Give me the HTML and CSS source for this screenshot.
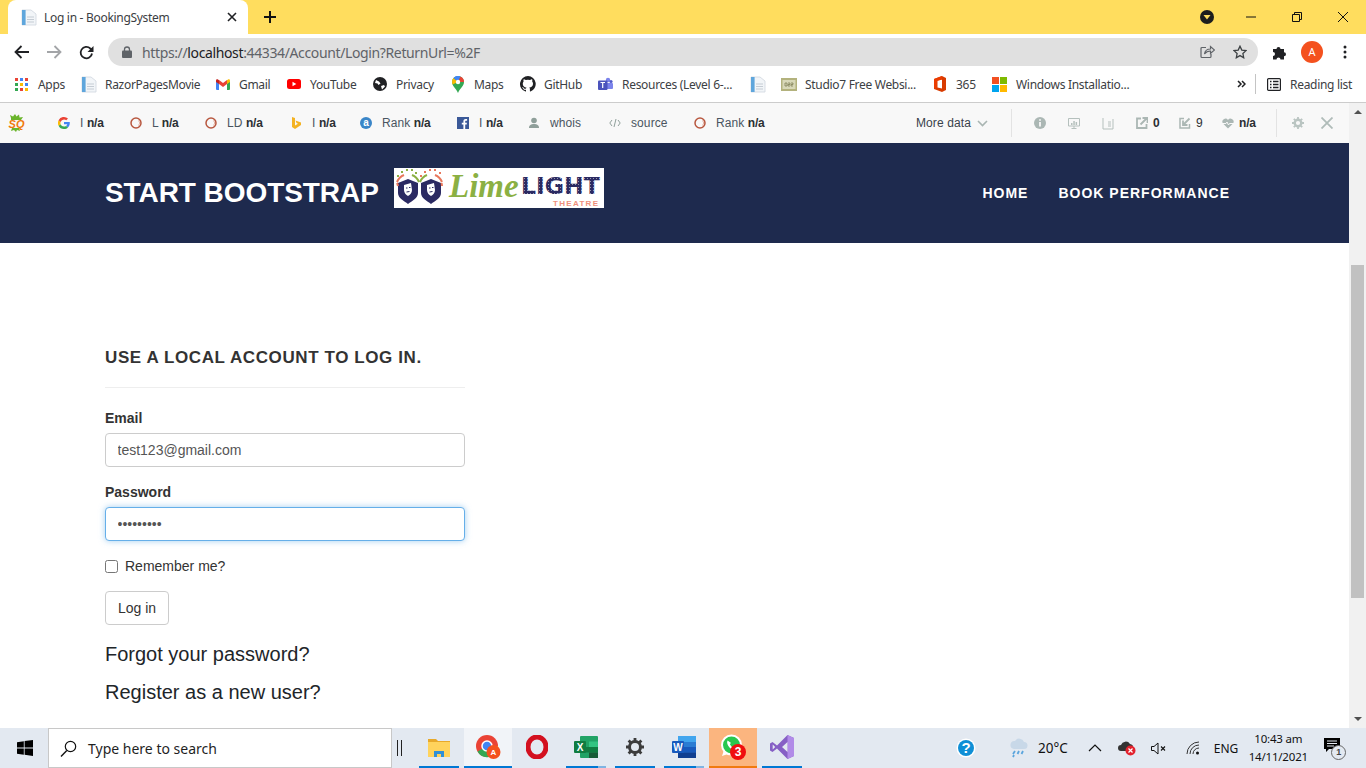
FILE: index.html
```html
<!DOCTYPE html>
<html lang="en">
<head>
<meta charset="utf-8">
<title>Log in - BookingSystem</title>
<link rel="stylesheet" href="styles.css">
</head>
<body>
<svg class="defs" width="0" height="0" aria-hidden="true">
  <symbol id="doc" viewBox="0 0 16 17">
    <path d="M1 1h9l5 4v11H1z" fill="#f2f5f8" stroke="#cfd6de" stroke-width=".8"/>
    <rect x="1" y="1" width="3.6" height="15" fill="#5fa6dc"/>
    <path d="M6 8h7M6 10.500h7M6 13h7" stroke="#c5ccd4" stroke-width="1"/>
  </symbol>
  <symbol id="ring" viewBox="0 0 12 12">
    <circle cx="6" cy="6" r="5" fill="none" stroke="#b8573f" stroke-width="1.500"/>
    <path d="M8.500 3.500a3.500 3.500 0 0 1 0 5" fill="none" stroke="#e7b5a5" stroke-width="1"/>
  </symbol>
  <pattern id="bulbs" width="3" height="3" patternUnits="userSpaceOnUse">
    <rect width="3" height="3" fill="#2b2a62"/>
    <circle cx="1.500" cy="1.500" r=".55" fill="#aab" />
  </pattern>
</svg>
<div class="tabstrip">
  <div class="tab">
    <svg class="fav" width="16" height="17"><use href="#doc"/></svg>
    <span class="tab-title">Log in - BookingSystem</span>
    <svg class="tab-x" width="10" height="10" viewBox="0 0 10 10"><path d="M1 1l8 8M9 1l-8 8" stroke="#202124" stroke-width="1.600"/></svg>
  </div>
  <svg class="newtab" width="12" height="12" viewBox="0 0 12 12"><path d="M6 0v12M0 6h12" stroke="#111" stroke-width="2"/></svg>
  <svg class="dl" width="14" height="14" viewBox="0 0 14 14"><circle cx="7" cy="7" r="7" fill="#1d1d1d"/><path d="M3.500 5h7L7 9.500z" fill="#ffdd5e"/></svg>
  <svg class="winbtn" width="10" height="10" viewBox="0 0 10 10"><path d="M0 5h10" stroke="#111" stroke-width="1"/></svg>
  <svg class="winbtn" width="10" height="10" viewBox="0 0 10 10"><path d="M.5 2.500h7v7h-7zM2.500 2.500v-2h7v7h-2" fill="none" stroke="#111" stroke-width="1"/></svg>
  <svg class="winbtn" width="10" height="10" viewBox="0 0 10 10"><path d="M0 0l10 10M10 0L0 10" stroke="#111" stroke-width="1"/></svg>
</div>
<div class="toolbar">
  <svg class="nav-ic" width="16" height="14" viewBox="0 0 16 14"><path d="M15 7H2M7.500 1L1.500 7l6 6" fill="none" stroke="#202124" stroke-width="1.800"/></svg>
  <svg class="nav-ic" width="16" height="14" viewBox="0 0 16 14"><path d="M1 7h13M8.500 1l6 6-6 6" fill="none" stroke="#a3a5a8" stroke-width="1.800"/></svg>
  <svg class="nav-ic" width="15" height="15" viewBox="0 0 15 15"><path d="M13 8.500A5.700 5.700 0 1 1 11.300 3.500L13.500 5.500" fill="none" stroke="#202124" stroke-width="1.800"/><path d="M14.500 1v6h-6z" fill="#202124"/></svg>
  <div class="omnibox">
    <svg width="10" height="12" viewBox="0 0 10 12"><path d="M2.500 5V3.500a2.500 2.500 0 0 1 5 0V5" fill="none" stroke="#5f6368" stroke-width="1.300"/><rect y="4.500" width="10" height="7.500" rx="1" fill="#5f6368"/></svg>
    <span class="url">https://<b class="host">localhost</b>:44334/Account/Login?ReturnUrl=%2F</span>
    <svg class="share" width="15" height="14" viewBox="0 0 15 14"><path d="M6 2.500H2a1 1 0 0 0-1 1v8a1 1 0 0 0 1 1h8a1 1 0 0 0 1-1V9" fill="none" stroke="#5f6368" stroke-width="1.200"/><path d="M4.500 9c.5-3.500 3-5 6-5V1.500L14.500 5 10.500 8.500V6c-2.500 0-4.500 1-6 3z" fill="none" stroke="#5f6368" stroke-width="1.200"/></svg>
    <svg class="star" width="14" height="14" viewBox="0 0 14 14"><path d="M7 1.200l1.800 3.900 4.200.5-3.100 2.900.8 4.200L7 10.600l-3.700 2.100.8-4.200L1 5.600l4.200-.5z" fill="none" stroke="#3c4043" stroke-width="1.300"/></svg>
  </div>
  <svg class="puzzle" width="16" height="16" viewBox="0 0 16 16"><path d="M1 5h3.500a2 2 0 1 1 4 0H12v3.300a2 2 0 1 1 0 4V15.500H8.500a2 2 0 1 0-4 0H1v-3.500a2 2 0 1 0 0-4z" fill="#202124"/></svg>
  <span class="avatar">A</span>
  <svg class="dots" width="4" height="14" viewBox="0 0 4 14"><circle cx="2" cy="2" r="1.500" fill="#202124"/><circle cx="2" cy="7" r="1.500" fill="#202124"/><circle cx="2" cy="12" r="1.500" fill="#202124"/></svg>
</div>
<div class="bookmarks">
  <div class="bm"><svg width="13" height="13" viewBox="0 0 13 13"><g><rect width="3" height="3" fill="#ea4335"/><rect x="5" width="3" height="3" fill="#4285f4"/><rect x="10" width="3" height="3" fill="#ea4335"/><rect y="5" width="3" height="3" fill="#34a853"/><rect x="5" y="5" width="3" height="3" fill="#fbbc05"/><rect x="10" y="5" width="3" height="3" fill="#4285f4"/><rect y="10" width="3" height="3" fill="#34a853"/><rect x="5" y="10" width="3" height="3" fill="#ea4335"/><rect x="10" y="10" width="3" height="3" fill="#fbbc05"/></g></svg><span class="apps-t">Apps</span></div>
  <div class="bm t"><svg width="16" height="17"><use href="#doc"/></svg><span>RazorPagesMovie</span></div>
  <div class="bm"><svg width="14" height="11" viewBox="0 0 14 11"><path d="M0 2v8a1 1 0 0 0 1 1h2V4.500z" fill="#4285f4"/><path d="M14 2v8a1 1 0 0 1-1 1h-2V4.500z" fill="#34a853"/><path d="M3 5V1l4 3 4-3v4L7 8z" fill="#ea4335"/><path d="M0 3V1.500C0 .5 1.200 0 2 .500L3 1.200V5z" fill="#c5221f"/><path d="M14 3V1.500c0-1-1.200-1.500-2-1L11 1.200V5z" fill="#fbbc05"/></svg><span>Gmail</span></div>
  <div class="bm"><svg width="14" height="10" viewBox="0 0 14 10"><rect width="14" height="10" rx="2.500" fill="#f00"/><path d="M5.500 2.800v4.400L9.300 5z" fill="#fff"/></svg><span>YouTube</span></div>
  <div class="bm"><svg width="14" height="14" viewBox="0 0 14 14"><circle cx="7" cy="7" r="7" fill="#202124"/><path d="M3 3l3 1.500 1.500 2-2 1.500-1-1.500-2.500-.5zM8 9l3-1 1 1.500-3 3z" fill="#fff"/></svg><span>Privacy</span></div>
  <div class="bm"><svg width="14" height="17" viewBox="0 0 13 17"><path d="M6.500 0A6 6 0 0 1 12.500 6c0 4-4 6-6 11C4.500 12 .5 10 .5 6A6 6 0 0 1 6.500 0z" fill="#34a853"/><path d="M2 2L6.500 6 1 8.500C.2 6 .5 3.500 2 2z" fill="#fbbc05"/><path d="M2 2A6 6 0 0 1 9 .500L6.500 6z" fill="#4285f4"/><path d="M9 .5A6 6 0 0 1 12.500 6L6.500 6z" fill="#ea4335"/><circle cx="6.500" cy="6" r="2.200" fill="#fff"/></svg><span>Maps</span></div>
  <div class="bm t"><svg width="16" height="16" viewBox="0 0 16 16"><path d="M8 0a8 8 0 0 0-2.500 15.600c.4.100.5-.2.500-.4v-1.400c-2.200.5-2.700-1-2.700-1-.4-.9-.9-1.200-.9-1.200-.7-.5.100-.5.100-.5.800.1 1.200.8 1.200.8.700 1.200 1.900.9 2.300.7.100-.5.300-.9.500-1.100-1.800-.2-3.700-.9-3.700-4 0-.9.300-1.600.8-2.100-.1-.2-.4-1 .1-2.100 0 0 .7-.2 2.200.8a7.600 7.600 0 0 1 4 0c1.500-1 2.200-.8 2.200-.8.400 1.100.2 1.900.1 2.100.5.600.8 1.300.8 2.100 0 3.100-1.900 3.700-3.700 3.900.3.300.6.800.6 1.500v2.200c0 .2.100.5.600.4A8 8 0 0 0 8 0z" fill="#202124"/></svg><span>GitHub</span></div>
  <div class="bm"><svg width="15" height="15" viewBox="0 0 15 15"><circle cx="10" cy="3" r="2.200" fill="#7b83eb"/><circle cx="13" cy="4.500" r="1.600" fill="#5059c9"/><rect x="8" y="6" width="7" height="6" rx="1" fill="#7b83eb"/><rect y="3.500" width="9.500" height="9.500" rx="1" fill="#4b53bc"/><path d="M2.500 5.500h4.500M4.700 5.500V11" stroke="#fff" stroke-width="1.200"/></svg><span>Resources (Level 6-...</span></div>
  <div class="bm"><svg width="16" height="17"><use href="#doc"/></svg></div>
  <div class="bm t"><svg width="16" height="13" viewBox="0 0 16 13"><rect width="16" height="13" fill="#b3b27d"/><rect x="1.500" y="2" width="13" height="9" fill="#d8d8b8"/><path d="M4 5h2v3H4zM7 5h2v1.500H7v1.500h2M10 5h2v1.500h-2V8h2" fill="none" stroke="#77774c" stroke-width=".7"/></svg><span>Studio7 Free Websi...</span></div>
  <div class="bm"><svg width="14" height="16" viewBox="0 0 14 16"><path d="M1 3l8-3 4 2v12l-4 2-8-3z" fill="#d83b01"/><path d="M4.500 4.500L9 3.500v9l-4.500-1z" fill="#fff"/><path d="M1 3l8-3v3.500L4 5v6.500L1 13z" fill="#eb3c00"/></svg><span>365</span></div>
  <div class="bm"><svg width="15" height="15" viewBox="0 0 15 15"><rect width="7" height="7" fill="#f25022"/><rect x="8" width="7" height="7" fill="#7fba00"/><rect y="8" width="7" height="7" fill="#00a4ef"/><rect x="8" y="8" width="7" height="7" fill="#ffb900"/></svg><span>Windows Installatio...</span></div>
  <div class="bm"><svg width="9" height="8" viewBox="0 0 9 8"><path d="M1 1l3 3-3 3M5 1l3 3-3 3" fill="none" stroke="#202124" stroke-width="1.500"/></svg></div>
  <div class="bm-sep"></div>
  <div class="bm"><svg width="14" height="13" viewBox="0 0 14 13"><rect x=".6" y=".6" width="12.800" height="11.800" rx="1" fill="none" stroke="#202124" stroke-width="1.200"/><path d="M3 3.500h1.500M3 6.500h1.500M3 9.500h1.500M6 3.500h5.500M6 6.500h5.500M6 9.500h5.500" stroke="#202124" stroke-width="1.300"/></svg><span>Reading list</span></div>
</div>
<div class="viewport">
  <div class="page-col">
    <div class="seobar">
      <div class="seo"><svg width="18" height="18" viewBox="0 0 18 18"><path d="M3 4L2 1l3 1.500L7 0l1.500 2.500L11 .5l.5 3L15 3l-2 3H3zM4 14l-1 3 3-1 2 2 1-2 3 1-1-3z" fill="#6bb52c"/><text class="sq" x=".5" y="13.500">SQ</text></svg></div>
      <div class="seo"><svg width="12" height="12" viewBox="0 0 12 12"><path d="M11.800 6.100c0-.4 0-.8-.1-1.200H6v2.300h3.300A2.800 2.800 0 0 1 8 9l2 1.500c1.100-1.100 1.800-2.600 1.800-4.400z" fill="#4285f4"/><path d="M6 12c1.600 0 3-.5 4-1.500L8 9c-.5.400-1.200.6-2 .6A3.600 3.600 0 0 1 2.600 7.200L.6 8.700A6 6 0 0 0 6 12z" fill="#34a853"/><path d="M2.600 7.200a3.600 3.600 0 0 1 0-2.300L.6 3.300a6 6 0 0 0 0 5.400z" fill="#fbbc05"/><path d="M6 2.400c.9 0 1.700.3 2.300.9L10 1.600A6 6 0 0 0 .6 3.300l2 1.600A3.600 3.600 0 0 1 6 2.400z" fill="#ea4335"/></svg><span>I <b>n/a</b></span></div>
      <div class="seo"><svg width="12" height="12"><use href="#ring"/></svg><span>L <b>n/a</b></span></div>
      <div class="seo"><svg width="12" height="12"><use href="#ring"/></svg><span>LD <b>n/a</b></span></div>
      <div class="seo"><svg width="12" height="12" viewBox="0 0 12 12"><path d="M2 0l3 1v7.500l3-1.800L6.500 6 5.500 3.500 11 5.500v2.500L5 12 2 10z" fill="#f4b323"/></svg><span>I <b>n/a</b></span></div>
      <div class="seo"><svg width="12" height="12" viewBox="0 0 12 12"><circle cx="6" cy="6" r="6" fill="#3a86c8"/><text class="al" x="6" y="9">a</text></svg><span>Rank <b>n/a</b></span></div>
      <div class="seo"><svg width="12" height="12" viewBox="0 0 12 12"><rect width="12" height="12" fill="#3b5998"/><path d="M8.200 12V7.500h1.500l.2-1.800H8.200V4.600c0-.5.200-.9.900-.9h1V2.100C9.800 2 9.300 2 8.700 2 7.300 2 6.400 2.800 6.400 4.300v1.400H4.800v1.800h1.600V12z" fill="#fff"/></svg><span>I <b>n/a</b></span></div>
      <div class="seo"><svg width="12" height="12" viewBox="0 0 12 12"><circle cx="6" cy="3.500" r="2.800" fill="#8f9f9a"/><path d="M1 11c0-3 2-4 5-4s5 1 5 4z" fill="#8f9f9a"/></svg><span>whois</span></div>
      <div class="seo"><svg width="12" height="12" viewBox="0 0 12 12"><path d="M3 3L.8 6 3 9M9 3l2.200 3L9 9M7 2L5 10" fill="none" stroke="#8f9f9a" stroke-width="1"/></svg><span>source</span></div>
      <div class="seo"><svg width="12" height="12"><use href="#ring"/></svg><span>Rank <b>n/a</b></span></div>
      <div class="seo more"><span>More data</span><svg width="11" height="7" viewBox="0 0 11 7"><path d="M1 1l4.500 4.500L10 1" fill="none" stroke="#a9b5b2" stroke-width="1.600"/></svg></div>
      <div class="seo-sep"></div>
      <div class="seo"><svg width="12" height="12" viewBox="0 0 12 12"><circle cx="6" cy="6" r="6" fill="#abb7b4"/><path d="M6 5v4.500M6 2.200v1.500" stroke="#f8f8f8" stroke-width="1.800"/></svg></div>
      <div class="seo"><svg width="12" height="12" viewBox="0 0 12 12"><path d="M.5 1.500h11v7.500H.5zM6 9v2M3.500 11.500h5" fill="none" stroke="#b5c0bd" stroke-width="1"/><path d="M3 6h1.500v2H3zM5.300 4h1.500v4H5.300zM7.600 5h1.500v3H7.600z" fill="#b5c0bd"/></svg></div>
      <div class="seo"><svg width="12" height="13" viewBox="0 0 12 13"><path d="M1 1v11h10V2" fill="none" stroke="#b5c0bd" stroke-width="1"/><path d="M6 5h3M6 7h3M6 9h3" stroke="#b5c0bd" stroke-width="1.200"/></svg></div>
      <div class="seo gap-s"><svg width="12" height="12" viewBox="0 0 12 12"><path d="M5 1.500H1v9.500h9.500V7" fill="none" stroke="#abb7b4" stroke-width="1.800"/><path d="M4.500 7.500L10.500 1.500M6.500 1h5v5" fill="none" stroke="#abb7b4" stroke-width="1.800"/></svg><b>0</b></div>
      <div class="seo gap-s"><svg width="12" height="12" viewBox="0 0 12 12"><path d="M5 1.500H1v9.500h9.500V7" fill="none" stroke="#abb7b4" stroke-width="1.500"/><path d="M10.500 1.500L4.500 7.500M4 3.500v4.500h4.500" fill="none" stroke="#abb7b4" stroke-width="1.800"/></svg><b class="nine">9</b></div>
      <div class="seo gap-s"><svg width="12" height="11" viewBox="0 0 12 11"><path d="M6 10.500L1 5.500a3 3 0 0 1 5-3.500 3 3 0 0 1 5 3.500z" fill="#abb7b4"/><path d="M0 5.500h4l1-1.500 1.500 3 1-1.500H12" fill="none" stroke="#f8f8f8" stroke-width="1"/></svg><b>n/a</b></div>
      <div class="seo-sep"></div>
      <div class="seo"><svg width="12" height="12" viewBox="0 0 12 12"><circle cx="6" cy="6" r="3.300" fill="none" stroke="#bac5c2" stroke-width="2.400"/><path d="M6 0v2M6 10v2M0 6h2M10 6h2M1.800 1.800l1.400 1.400M8.800 8.800l1.400 1.400M10.200 1.800L8.800 3.200M3.200 8.800l-1.400 1.400" stroke="#bac5c2" stroke-width="1.800"/></svg></div>
      <div class="seo"><svg width="12" height="12" viewBox="0 0 12 12"><path d="M.5.500l11 11M11.500.500l-11 11" stroke="#b0bcb9" stroke-width="1.800"/></svg></div>
    </div>
    <header class="site-nav">
      <a class="brand">START BOOTSTRAP</a>
      <svg class="logo" width="210" height="40" viewBox="0 0 210 40">
        <rect width="210" height="40" fill="#fff"/>
        <g>
          <path d="M4 15l10-4 10 4v10c0 5-6 8-10 11-4-3-10-6-10-11z" fill="#2b2a62"/>
          <path d="M10 17l7-2 1 7c0 3-2 5-4 6-2-1-4-3-4-6z" fill="#fff"/>
          <path d="M12 20h1.500M15 19.500h1.500M12.500 24l3-.5" stroke="#2b2a62" stroke-width="1"/>
          <path d="M3 14a13 13 0 0 1 7-7M4 18a14 14 0 0 0-1-3" fill="none" stroke="#e8775c" stroke-width="2"/>
          <path d="M25 14a13 13 0 0 0-7-7" fill="none" stroke="#8bb043" stroke-width="2"/>
          <path d="M3 8h2M7 4h2M12 2h2M17 2h2M21 5h2" stroke="#8bb043" stroke-width="2.200"/>
        </g>
        <g>
          <path d="M27 15l10-4 10 4v10c0 5-6 8-10 11-4-3-10-6-10-11z" fill="#2b2a62"/>
          <path d="M33 17l7-2 1 7c0 3-2 5-4 6-2-1-4-3-4-6z" fill="#fff"/>
          <path d="M35 20h1.500M38 19.500h1.500M35.500 24l3-.5" stroke="#2b2a62" stroke-width="1"/>
          <path d="M26 14a13 13 0 0 1 7-7" fill="none" stroke="#8bb043" stroke-width="2"/>
          <path d="M48 14a13 13 0 0 0-7-7M48 18a14 14 0 0 0-.5-3" fill="none" stroke="#e8775c" stroke-width="2"/>
          <path d="M26 8h2M30 4h2M35 2h2M40 2h2M45 5h2" stroke="#e8775c" stroke-width="2.200"/>
        </g>
        <text class="lime" x="55" y="29">Lime</text>
        <text class="light" x="127" y="26">LIGHT</text>
        <text class="theatre" x="159" y="38">THEATRE</text>
      </svg>
      <nav class="links"><a>HOME</a><a>BOOK PERFORMANCE</a></nav>
    </header>
    <main class="content">
      <form class="login">
        <h2>USE A LOCAL ACCOUNT TO LOG IN.</h2>
        <hr>
        <label for="em">Email</label>
        <input id="em" type="text" value="test123@gmail.com">
        <label for="pw">Password</label>
        <input id="pw" class="focus" type="password" value="password1">
        <label class="check"><input type="checkbox"><span>Remember me?</span></label>
        <button type="button">Log in</button>
      </form>
      <p class="lnk first">Forgot your password?</p>
      <p class="lnk">Register as a new user?</p>
    </main>
  </div>
  <aside class="scrollbar">
    <i class="arrow up"></i>
    <div class="thumb"></div>
    <i class="arrow down"></i>
  </aside>
</div>
<footer class="taskbar">
  <svg class="t-win" width="16" height="16" viewBox="0 0 16 16"><path d="M0 2.200l6.800-1v6.300H0zM7.600 1l8.400-1v7.500H7.600zM0 8.400h6.800v6.400L0 13.800zM7.600 8.400H16V16l-8.400-1.200z" fill="#000"/></svg>
  <div class="search"><svg width="17" height="17" viewBox="0 0 17 17"><circle cx="10.500" cy="6.500" r="5.200" fill="none" stroke="#111" stroke-width="1.200"/><path d="M6.800 10.500L1 16.500" stroke="#111" stroke-width="1.400"/></svg><span>Type here to search</span></div>
  <div class="bars"></div>
  <div class="apps">
    <div class="app run"><svg width="22" height="20" viewBox="0 0 22 20"><path d="M0 2h8l2 2h12v4H0z" fill="#e8a92a"/><rect y="5" width="22" height="15" fill="#ffd35c"/><path d="M6 20v-6h10v6h-3v-3H9v3z" fill="#2f8fd8"/></svg></div>
    <div class="app run active"><svg width="26" height="26" viewBox="0 0 26 26"><circle cx="12" cy="12" r="11" fill="#ea4335"/><path d="M12 12L2.500 17.500A11 11 0 0 0 14 23z" fill="#34a853"/><path d="M12 12h11A11 11 0 0 1 14 23z" fill="#fbbc05"/><circle cx="12" cy="12" r="5" fill="#4285f4" stroke="#fff" stroke-width="1.500"/><circle cx="18.500" cy="18" r="7" fill="#f4511e"/><text class="chrome-a" x="18.500" y="21">A</text></svg></div>
    <div class="app"><svg width="22" height="24" viewBox="0 0 22 24"><ellipse cx="11" cy="12" rx="9" ry="10" fill="none" stroke="#d3101f" stroke-width="5"/></svg></div>
    <div class="app run multi"><svg width="24" height="22" viewBox="0 0 24 22"><rect x="6" width="18" height="22" rx="1" fill="#21a366"/><rect x="15" y="5.500" width="9" height="5.500" fill="#33c481"/><rect x="6" y="11" width="18" height="5.500" fill="#107c41"/><rect x="15" y="16.500" width="9" height="5.500" fill="#185c37"/><rect y="5" width="12" height="12" rx="1" fill="#107c41"/><text class="off-l" x="6" y="15">X</text></svg></div>
    <div class="app run"><svg width="18" height="18" viewBox="0 0 18 18"><circle cx="9" cy="9" r="5.500" fill="none" stroke="#3c3c3c" stroke-width="3"/><path d="M9 0v3.500M9 14.500V18M0 9h3.500M14.500 9H18M2.600 2.600l2.500 2.500M12.900 12.900l2.500 2.500M15.400 2.600l-2.500 2.500M5.100 12.900l-2.500 2.500" stroke="#3c3c3c" stroke-width="2.800"/></svg></div>
    <div class="app run multi"><svg width="24" height="22" viewBox="0 0 24 22"><rect x="6" width="18" height="22" rx="1" fill="#2b7cd3"/><rect x="6" width="18" height="6" fill="#41a5ee"/><rect x="6" y="11" width="18" height="5.500" fill="#185abd"/><rect x="6" y="16.500" width="18" height="5.500" fill="#103f91"/><rect y="5" width="12" height="12" rx="1" fill="#185abd"/><text class="off-l" x="6" y="15">W</text></svg></div>
    <div class="app wa"><svg width="26" height="26" viewBox="0 0 26 26"><circle cx="11.500" cy="11" r="9.500" fill="#29c74e" stroke="#fff" stroke-width="2"/><path d="M2 22l2-6 4 4z" fill="#fff"/><path d="M7.500 6.500c-1 2 0 5 2 7s4.500 3 6.500 2l-1-2.500-2 .5c-1-.5-2.500-2-3-3l.8-1.800z" fill="#fff"/><circle cx="18" cy="18" r="8" fill="#f00e0e"/><text class="wa-n" x="18" y="22">3</text></svg></div>
    <div class="app run"><svg width="24" height="24" viewBox="0 0 24 24"><path d="M17.500 0L24 3v18l-6.500 3L7 13.500 2.500 17 0 15.500v-7L2.500 7 7 10.500z" fill="#865fc5"/><path d="M17.500 0L24 3v18l-6.500 3z" fill="#b18be8"/><path d="M17.500 7l-5.500 5 5.500 5zM2.700 9.500v5l2.500-2.500z" fill="#e3e9f1"/></svg></div>
  </div>
  <div class="tray">
    <svg class="help" width="20" height="20" viewBox="0 0 20 20"><circle cx="10" cy="10" r="9.500" fill="#fff"/><circle cx="10" cy="10" r="8" fill="#0f8fd6"/><text class="qm" x="10" y="15">?</text></svg>
    <svg class="weather" width="20" height="20" viewBox="0 0 20 20"><path d="M5 11a4 4 0 0 1 1-8 5 5 0 0 1 9 1 3.500 3.500 0 0 1 0 7z" fill="#c8d8e8"/><path d="M6 13l-2 3M10 13l-1.500 3M14 13l-1.500 3M5 17l-1 2" stroke="#5ba5dd" stroke-width="1.800"/></svg>
    <span class="temp">20°C</span>
    <svg class="caret" width="14" height="8" viewBox="0 0 14 8"><path d="M1 7l6-6 6 6" fill="none" stroke="#111" stroke-width="1.200"/></svg>
    <svg class="cloud" width="18" height="16" viewBox="0 0 18 16"><path d="M3 11a3 3 0 0 1 0-6 5 5 0 0 1 9-1 3.500 3.500 0 0 1 3 4v3z" fill="#333"/><circle cx="12.500" cy="10.500" r="5" fill="#e3222d"/><path d="M10.500 8.500l4 4M14.500 8.500l-4 4" stroke="#fff" stroke-width="1.200"/></svg>
    <svg class="speaker" width="15" height="13" viewBox="0 0 15 13"><path d="M.5 4.500h2.500L7 1v11L3 8.500H.5z" fill="none" stroke="#111" stroke-width="1"/><path d="M10 4.500l4 4M14 4.500l-4 4" stroke="#111" stroke-width="1.100"/></svg>
    <svg class="wifi" width="14" height="14" viewBox="0 0 14 14"><path d="M1 13A12 12 0 0 1 13 1M4 13a9 9 0 0 1 9-9M7 13a6 6 0 0 1 6-6" fill="none" stroke="#333" stroke-width="1"/><circle cx="11.500" cy="12" r="1.500" fill="#111"/></svg>
    <span class="eng">ENG</span>
    <div class="clock"><span>10:43 am</span><span>14/11/2021</span></div>
    <div class="notif"><svg width="16" height="16" viewBox="0 0 16 16"><path d="M0 0h16v11H5l-3 3v-3H0z" fill="#000"/><path d="M3 3h10M3 5.500h10M3 8h7" stroke="#e3e9f1" stroke-width="1"/></svg><span class="badge">1</span></div>
  </div>
</footer>
</body>
</html>
```
FILE: styles.css
```css
* { box-sizing: border-box; }
html, body { margin: 0; padding: 0; height: 768px; overflow: hidden; }
body { width: 1366px; background: #fff; font-family: "Liberation Sans", Arial, sans-serif; display: flex; flex-direction: column; color: #212529; }
.defs { position: absolute; }
svg { display: block; flex: none; }

/* tab strip */
.tabstrip { height: 34px; background: #ffdd5e; display: flex; align-items: center; padding-left: 8px; flex: none; }
.tab { width: 240px; height: 34px; background: #fff; border-radius: 8px 8px 0 0; display: flex; align-items: center; padding-left: 13px; }
.tab-title { font: 12px "Noto Sans", sans-serif; color: #3c4043; margin-left: 7px; flex: 1; letter-spacing: -.3px; }
.tab-x { margin-right: 11px; }
.newtab { margin-left: 16px; }
.dl { margin-left: 924px; }
.winbtn { margin-left: 36px; }
.dl + .winbtn { margin-left: 32px; }

/* toolbar */
.toolbar { height: 36px; background: #fff; display: flex; align-items: center; padding-left: 14px; flex: none; }
.nav-ic { margin-right: 16px; }
.nav-ic + .nav-ic + .nav-ic { margin: 0 14px 0 1px; }
.omnibox { width: 1150px; height: 28px; background: #e0e0e0; border-radius: 14px; display: flex; align-items: center; padding-left: 14px; }
.url { font: 14px "Noto Sans", sans-serif; color: #5f6368; margin-left: 10px; flex: 1; letter-spacing: -.37px; }
.host { font-weight: 400; color: #202124; }
.share { margin-right: 18px; }
.star { margin-right: 11px; }
.puzzle { margin-left: 14px; }
.avatar { width: 22px; height: 22px; border-radius: 50%; background: #f4511e; color: #fff; font: 11px/22px "Noto Sans", sans-serif; text-align: center; margin-left: 13px; }
.dots { margin-left: 20px; }

/* bookmarks */
.bookmarks { height: 33px; background: #fff; border-bottom: 1px solid #ccc; padding: 0 0 4px 15px; display: grid; grid-template-columns: 66px 135px 71px 86px 78px 69px 78px 152px 31px 152px 59px 245px 18px 12px auto; align-items: center; flex: none; }
.bm { display: flex; align-items: center; gap: 9px; font: 12px "Noto Sans", sans-serif; color: #3c4043; white-space: nowrap; letter-spacing: -.3px; }
.bm.t { gap: 8px; }
.apps-t { margin-left: 1px; }
.bm-sep { width: 1px; height: 20px; background: #c4c4c4; }

/* viewport */
.viewport { display: flex; height: 625px; flex: none; }
.page-col { width: 1349px; display: flex; flex-direction: column; }
.scrollbar { width: 17px; background: #f1f1f1; display: flex; flex-direction: column; align-items: center; }
.thumb { width: 13px; height: 333px; background: #c1c1c1; margin-top: 151px; }
.arrow { width: 0; height: 0; border-left: 4px solid transparent; border-right: 4px solid transparent; }
.arrow.up { border-bottom: 4px solid #505050; margin-top: 7px; margin-bottom: 0; }
.arrow.down { border-top: 4px solid #505050; margin-top: auto; margin-bottom: 7px; }

/* seo bar */
.seobar { height: 40px; background: #f8f8f8; padding-left: 8px; display: grid; grid-template-columns: 50px 72px 75px 85px 70px 97px 71px 81px 85px 222px 95px 23px 34px 34px 34px 43px 43px 54px 16px 29px auto; align-items: center; flex: none; font-size: 12px; color: #4a5560; letter-spacing: .1px; }
.seo { display: flex; align-items: center; gap: 10px; white-space: nowrap; }
.seo b { color: #2b2f33; letter-spacing: -.2px; }
.seo .nine { font-weight: 400; }
.gap-s { gap: 5px; }
.more { gap: 6px; color: #39424b; }
.seo-sep { width: 1px; height: 28px; background: #e3e3e3; }
.sq { font: italic 700 11px "Liberation Sans", sans-serif; fill: #f07a0c; }
.al { font: bold 10px "Liberation Sans", sans-serif; fill: #fff; text-anchor: middle; }

/* site nav */
.site-nav { height: 100px; background: #1e2a4e; display: flex; align-items: center; padding-left: 105px; flex: none; }
.brand { font-size: 28px; font-weight: 700; color: #fff; letter-spacing: -.07px; }
.logo { margin: 0 0 10px 15px; }
.lime { font: italic bold 33px "Liberation Serif", serif; fill: #8bb043; }
.light { font: bold 23.500px "DejaVu Sans", sans-serif; fill: url(#bulbs); }
.theatre { font: bold 8px "Liberation Sans", sans-serif; fill: #ef8f7c; letter-spacing: 1.300px; }
.links { margin-left: auto; margin-right: 119px; display: flex; gap: 30px; font-size: 14px; font-weight: 700; color: #fff; letter-spacing: 1px; }

/* content */
.content { flex: 1; padding: 106px 0 0 105px; background: #fff; }
.login { width: 360px; display: flex; flex-direction: column; align-items: flex-start; }
h2 { margin: 0; font-size: 17px; line-height: 18px; font-weight: 700; letter-spacing: .6px; color: #333; }
hr { width: 100%; height: 1px; background: #eee; border: 0; margin: 20px 0 22px; }
label { font-size: 14px; line-height: 16px; font-weight: 700; margin-bottom: 7px; color: #333; }
.login input[type=text], .login input[type=password] { width: 360px; height: 34px; border: 1px solid #ccc; border-radius: 4px; padding: 0 11.500px; font: 14px "Liberation Sans", sans-serif; color: #555; margin-bottom: 17px; outline: 0; background: #fff; }
.login input.focus { border-color: #66afe9; box-shadow: 0 0 6px rgba(102,175,233,.6); margin-bottom: 17px; }
.check { display: flex; align-items: center; font-weight: 400; gap: 7px; margin: 0 0 17px; color: #333; }
.check input { width: 13px; height: 13px; margin: 0; }
button { width: 64px; height: 34px; background: #fff; border: 1px solid #ccc; border-radius: 4px; font: 14px "Liberation Sans", sans-serif; color: #333; padding: 0; }
.lnk { margin: 0; font-size: 20px; line-height: 23px; color: #212529; }
.lnk.first { margin-top: 18px; margin-bottom: 15px; }

/* taskbar */
.taskbar { height: 40px; background: #e3e9f1; display: flex; align-items: center; flex: none; position: relative; }
.t-win { margin-left: 17px; }
.search { width: 344px; height: 40px; margin-left: 15px; background: #fff; border: 1px solid #c8c8c8; display: flex; align-items: center; padding-left: 11px; gap: 11px; font: 14px "Noto Sans", sans-serif; color: #1f1f1f; }
.bars { width: 5px; height: 16px; margin-left: 5px; border-left: 1px solid #222; border-right: 1px solid #222; }
.apps { display: grid; grid-template-columns: 45px 53px 49px 49px 49px 45px 53px 40px; margin-left: 17px; height: 40px; }
.app { width: 40px; height: 40px; display: flex; align-items: center; justify-content: center; border-bottom: 2px solid transparent; position: relative; }
.app.run { border-bottom-color: #0078d4; }
.app.active { width: 48px; background: #f1f4f8; }
.app.wa { width: 48px; background: #fbb57f; border-bottom-color: #f07a10; }
.app.multi::after { content: ""; position: absolute; right: 0; bottom: -2px; width: 8px; height: 2px; background: #7fb4e3; }
.tray { position: absolute; inset: 0 0 0 auto; width: 420px; display: flex; align-items: center; font: 13px "Noto Sans", sans-serif; color: #111; }
.help { margin-left: 10px; }
.qm { font: bold 15px "Liberation Sans", sans-serif; fill: #fff; text-anchor: middle; }
.weather { margin-left: 33px; }
.temp { font-size: 13.500px; margin-left: 9px; }
.caret { margin-left: 20px; }
.cloud { margin-left: 16px; }
.speaker { margin-left: 15px; }
.wifi { margin-left: 20px; }
.eng { font-size: 12px; margin-left: 14px; }
.clock { display: flex; flex-direction: column; align-items: center; font-size: 11.500px; letter-spacing: -.2px; line-height: 18px; margin-left: 10px; width: 60px; }
.notif { margin-left: 16px; position: relative; width: 22px; height: 24px; padding-top: 2px; }
.badge { position: absolute; right: 0; bottom: 0; width: 15px; height: 15px; border-radius: 50%; background: #e3e9f1; border: 1px solid #666; font: bold 9px/13px "Liberation Sans", sans-serif; text-align: center; color: #444; }
.chrome-a { font: bold 8px "Liberation Sans", sans-serif; fill: #fff; text-anchor: middle; }
.off-l { font: bold 10px "Liberation Sans", sans-serif; fill: #fff; text-anchor: middle; }
.wa-n { font: bold 12px "Liberation Sans", sans-serif; fill: #fff; text-anchor: middle; }
```
